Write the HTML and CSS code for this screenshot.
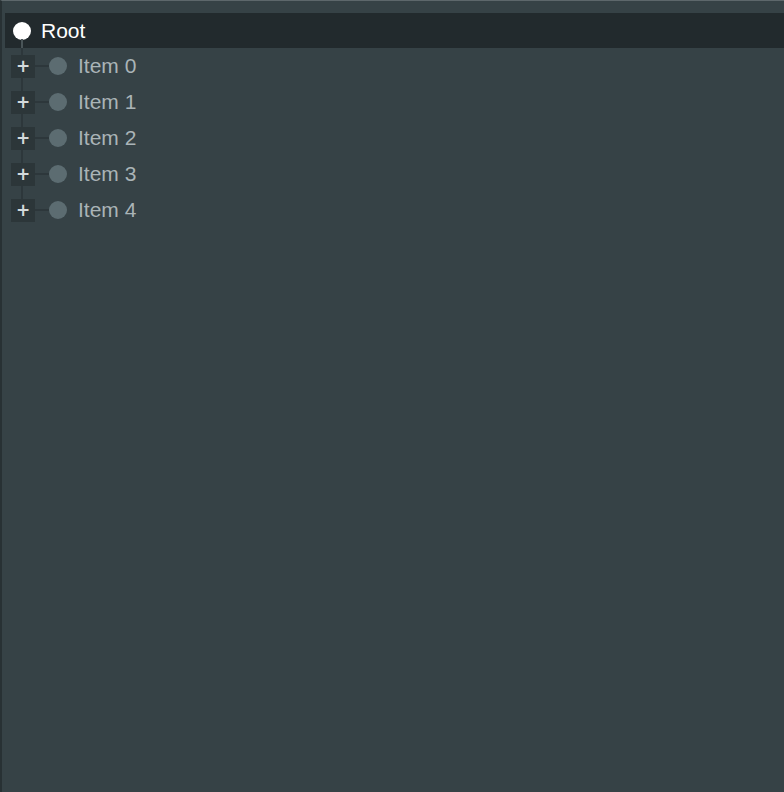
FILE: index.html
```html
<!DOCTYPE html>
<html lang="en">
<head>
  <meta charset="UTF-8" />
  <title>Tree</title>
  <link rel="stylesheet" href="styles.css">
</head>
<body>
  <div id="tree">
    <div class="node root">
      <div class="row selected">
        <span class="dot"></span>
        <span class="label">Root</span>
      </div>
      <ul class="children">
        <li class="row"><span class="toggle">+</span><span class="dot"></span><span class="label">Item 0</span></li>
        <li class="row"><span class="toggle">+</span><span class="dot"></span><span class="label">Item 1</span></li>
        <li class="row"><span class="toggle">+</span><span class="dot"></span><span class="label">Item 2</span></li>
        <li class="row"><span class="toggle">+</span><span class="dot"></span><span class="label">Item 3</span></li>
        <li class="row"><span class="toggle">+</span><span class="dot"></span><span class="label">Item 4</span></li>
      </ul>
    </div>
  </div>
</body>
</html>
```

FILE: styles.css
```css
:root {
  --bg: #364246;
  --sel: #222a2d;
  --line: #2d373b;
  --box: #2c3639;
  --dot: #5c6c71;
  --text: #aab4b7;
  --plus: #d4dadc;
}
* { box-sizing: border-box; }
html, body { margin: 0; height: 100%; }
body {
  background: var(--bg);
  font-family: "Liberation Sans", Arial, sans-serif;
}

/* ===== Panel ===== */
#tree {
  height: 792px;
  border-top: 1px solid #5d676b;
  border-left: 2px solid #283134;
  padding-top: 12px;
  padding-left: 3px;
  overflow: hidden;
}

/* ===== Wiersze ===== */
.node { position: relative; }
.row { display: flex; align-items: center; position: relative; }
.root > .row { height: 35px; padding-left: 8px; }
.root > .row.selected { background: var(--sel); }
.dot { width: 18px; height: 18px; border-radius: 50%; background: #fff; flex: 0 0 auto; }
.label { font-size: 21px; color: #fff; margin-left: 10px; }

.root > .row::after {
  content: ""; position: absolute; left: 16px; top: 26px; width: 2px; bottom: 0;
  background: #4a5558;
}

/* ===== Dzieci ===== */
.children { list-style: none; margin: 0; padding: 0; position: relative; }
.children::before {
  content: ""; position: absolute; left: 16px; top: 0; width: 2px; height: 162px;
  background: var(--line);
}
.children .row { height: 36px; padding-left: 6px; }
.children .row::before {
  content: ""; position: absolute; left: 28px; width: 16px; top: 17px; height: 2px;
  background: var(--line);
}
.toggle {
  width: 24px; height: 23px; background: var(--box); position: relative; z-index: 1;
  color: var(--plus); font-family: "DejaVu Sans", sans-serif; font-weight: bold;
  font-size: 17px; line-height: 23px; text-align: center;
}
.children .dot { background: var(--dot); margin-left: 14px; position: relative; z-index: 1; }
.children .label { color: var(--text); margin-left: 11px; }
```
